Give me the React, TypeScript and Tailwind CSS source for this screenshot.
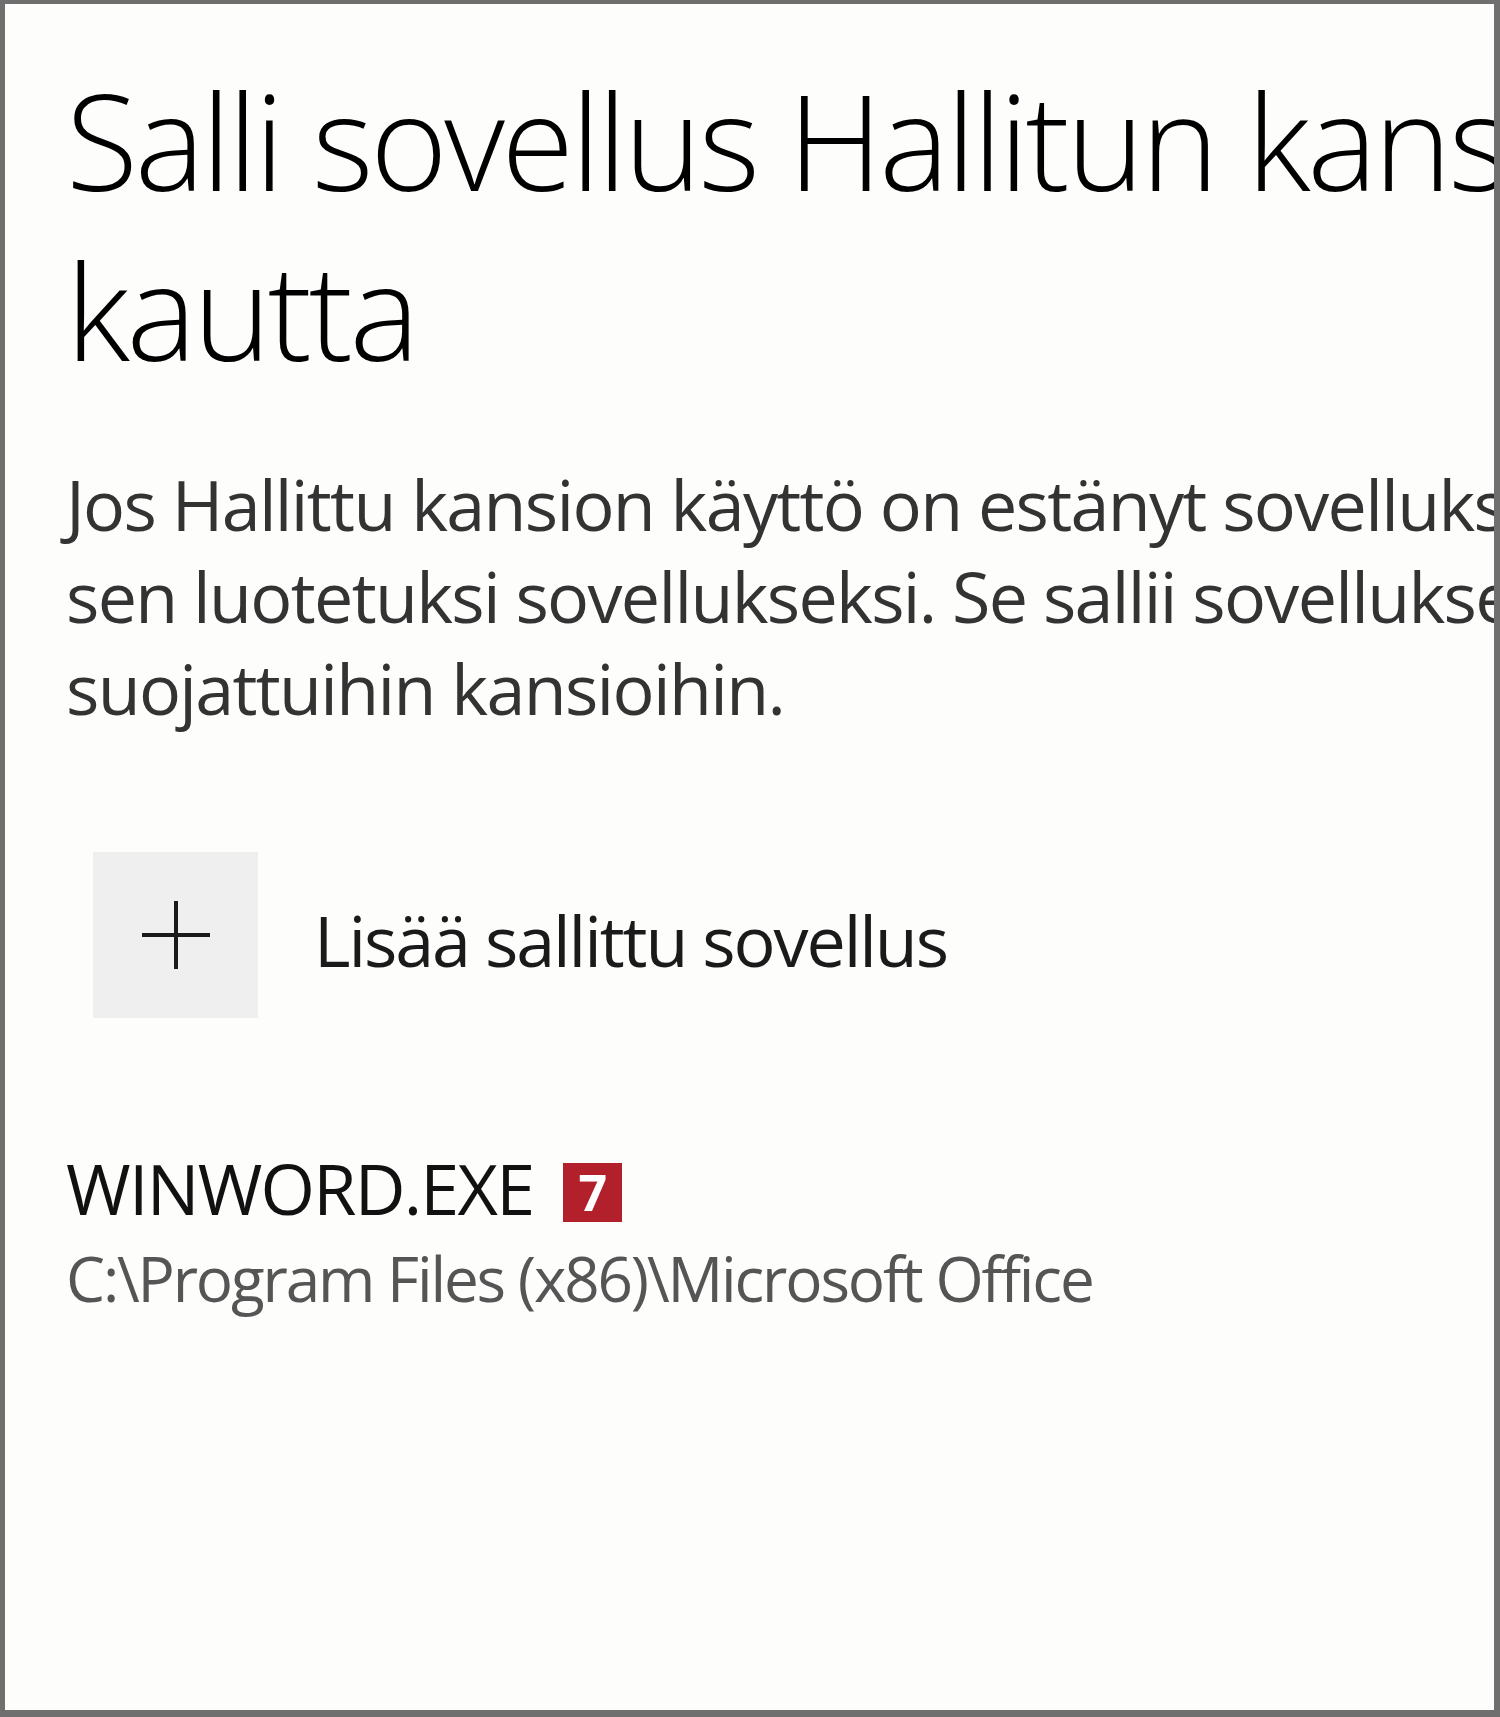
import React from "react";

const PlusIcon: React.FC = () => (
  <svg width="72" height="72" viewBox="0 0 72 72" fill="none">
    <path d="M36 2V70M2 36H70" stroke="#1a1a1a" strokeWidth="4" />
  </svg>
);

const App: React.FC = () => {
  return (
    <div className="h-[1717px] w-[1500px] bg-[#6f6f6f] pt-[4px] pl-[5px] pr-[6px] pb-[7px]">
      <div className="h-full overflow-hidden bg-[#fdfdfc] pl-[61px] pt-[51px] font-['Open_Sans',sans-serif]">
        {/* page title */}
        <h1 className="whitespace-nowrap text-[132px] leading-[170px] font-light tracking-[-0.025em] text-black">
          Salli sovellus Hallitun kansion käytön
          <br />
          kautta
        </h1>

        <p className="mt-[63px] whitespace-nowrap text-[70px] leading-[92px] tracking-[-0.024em] text-[#333333]">
          Jos Hallittu kansion käyttö on estänyt sovelluksen, voit lisätä
          <br />
          sen luotetuksi sovellukseksi. Se sallii sovelluksen tehdä muutoksia
          <br />
          suojattuihin kansioihin.
        </p>

        {/* add button */}
        <button className="mt-[118px] ml-[27px] flex items-center gap-[56px] text-left">
          <span className="flex h-[166px] w-[165px] items-center justify-center bg-[#efefef]">
            <PlusIcon />
          </span>
          <span className="pt-[10px] whitespace-nowrap text-[70px] tracking-[-0.03em] text-[#1a1a1a]">
            Lisää sallittu sovellus
          </span>
        </button>

        {/* allowed app */}
        <div className="mt-[130px]">
          <div className="flex items-center whitespace-nowrap text-[70px] leading-[80px] tracking-[-0.025em] text-[#111111]">
            WINWORD.EXE
            <span className="ml-[30px] mt-[8px] flex h-[59px] w-[59px] items-center justify-center bg-[#b2202b] text-[50px] font-bold leading-none tracking-normal text-white">
              7
            </span>
          </div>
          <div className="mt-[10px] whitespace-nowrap text-[62px] leading-[80px] tracking-[-0.035em] text-[#555555]">
            C:\Program Files (x86)\Microsoft Office
          </div>
        </div>
      </div>
    </div>
  );
};

export default App;
